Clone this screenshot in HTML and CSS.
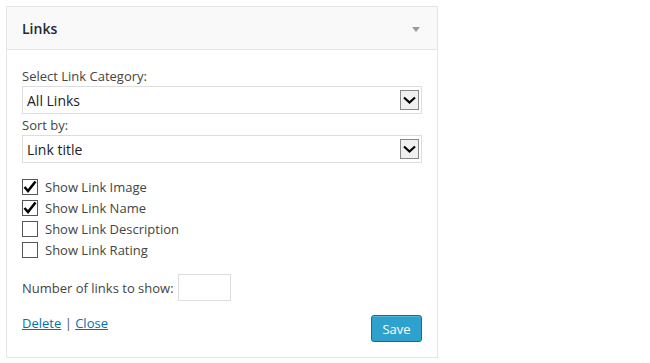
FILE: index.html
```html
<!DOCTYPE html>
<html>
<head>
    <title>Links widget</title>
    <link rel="stylesheet" href="styles.css">
</head>
<body>
    <div class="widget">
        <div class="widget-top">
            <h3>Links</h3>
            <span class="toggle"></span>
        </div>

        <div class="widget-inside">
            <label class="field-label">Select Link Category:</label>
            <div class="select">
                <span>All Links</span>
                <span class="select-btn">
                    <svg width="13" height="8" viewBox="0 0 13 8"><path d="M1 1.5 L6.5 6.5 L12 1.5" fill="none" stroke="#000" stroke-width="2.2"/></svg>
                </span>
            </div>

            <label class="field-label">Sort by:</label>
            <div class="select">
                <span>Link title</span>
                <span class="select-btn">
                    <svg width="13" height="8" viewBox="0 0 13 8"><path d="M1 1.5 L6.5 6.5 L12 1.5" fill="none" stroke="#000" stroke-width="2.2"/></svg>
                </span>
            </div>

            <ul class="checks">
                <li><span class="box checked"><svg width="14" height="14" viewBox="0 0 14 14"><path d="M1.5 7 L5 11 L12.5 1.5" fill="none" stroke="#000" stroke-width="2.6"/></svg></span>Show Link Image</li>
                <li><span class="box checked"><svg width="14" height="14" viewBox="0 0 14 14"><path d="M1.5 7 L5 11 L12.5 1.5" fill="none" stroke="#000" stroke-width="2.6"/></svg></span>Show Link Name</li>
                <li><span class="box"></span>Show Link Description</li>
                <li><span class="box"></span>Show Link Rating</li>
            </ul>

            <div class="number-row">
                <label>Number of links to show:</label>
                <input type="text" class="small-input">
            </div>

            <div class="widget-control">
                <div class="control-links">
                    <a href="#">Delete</a> | <a href="#">Close</a>
                </div>
                <button class="save">Save</button>
            </div>
        </div>
    </div>
</body>
</html>
```

FILE: styles.css
```css
* {
    box-sizing: border-box;
    margin: 0;
    padding: 0;
}

body {
    font-family: 'Open Sans', sans-serif;
    font-size: 13px;
    color: #444;
    background: #fff;
    padding: 6px;
}

.widget {
    width: 432px;
    border: 1px solid #e5e5e5;
    background: #fff;
}

.widget-top {
    display: flex;
    justify-content: space-between;
    align-items: center;
    height: 43px;
    padding: 0 15px;
    background: #f9f9f9;
    border-bottom: 1px solid #e5e5e5;
}

.widget-top h3 {
    font-size: 14px;
    font-weight: 600;
    color: #23282d;
}

.toggle {
    width: 0;
    height: 0;
    border-left: 4px solid transparent;
    border-right: 4px solid transparent;
    border-top: 5px solid #999;
    margin-right: 2px;
    margin-top: 2px;
}

.widget-inside {
    padding: 16px 15px 15px;
}

.field-label {
    display: block;
    line-height: 20px;
}

.select {
    display: flex;
    justify-content: space-between;
    align-items: center;
    height: 28px;
    border: 1px solid #ddd;
    padding: 0 2px 0 4px;
    font-size: 14px;
    color: #222;
    margin-bottom: 1px;
}

.select-btn {
    display: flex;
    align-items: center;
    justify-content: center;
    width: 19px;
    height: 20px;
    border: 1px solid #888;
    background: #f0f0f0;
}

.checks {
    list-style: none;
    margin-top: 13px;
}

.checks li {
    display: flex;
    align-items: center;
    height: 21px;
}

.box {
    display: flex;
    align-items: center;
    justify-content: center;
    width: 16px;
    height: 16px;
    border: 1px solid #555;
    margin-right: 7px;
    background: #fff;
}

.number-row {
    display: flex;
    align-items: center;
    gap: 4px;
    margin-top: 14px;
}

.small-input {
    width: 53px;
    height: 27px;
    border: 1px solid #ddd;
    font-family: inherit;
}

.widget-control {
    display: flex;
    justify-content: space-between;
    align-items: flex-start;
    margin-top: 14px;
}

.control-links {
    margin-top: -1px;
    color: #555;
}

.control-links a {
    color: #0073aa;
}

.save {
    width: 51px;
    height: 27px;
    background: #2ea2cc;
    border: 1px solid #0074a2;
    border-radius: 3px;
    color: #fff;
    font-family: inherit;
    font-size: 13px;
    box-shadow: inset 0 1px 0 rgba(120, 200, 230, 0.5);
}
```
